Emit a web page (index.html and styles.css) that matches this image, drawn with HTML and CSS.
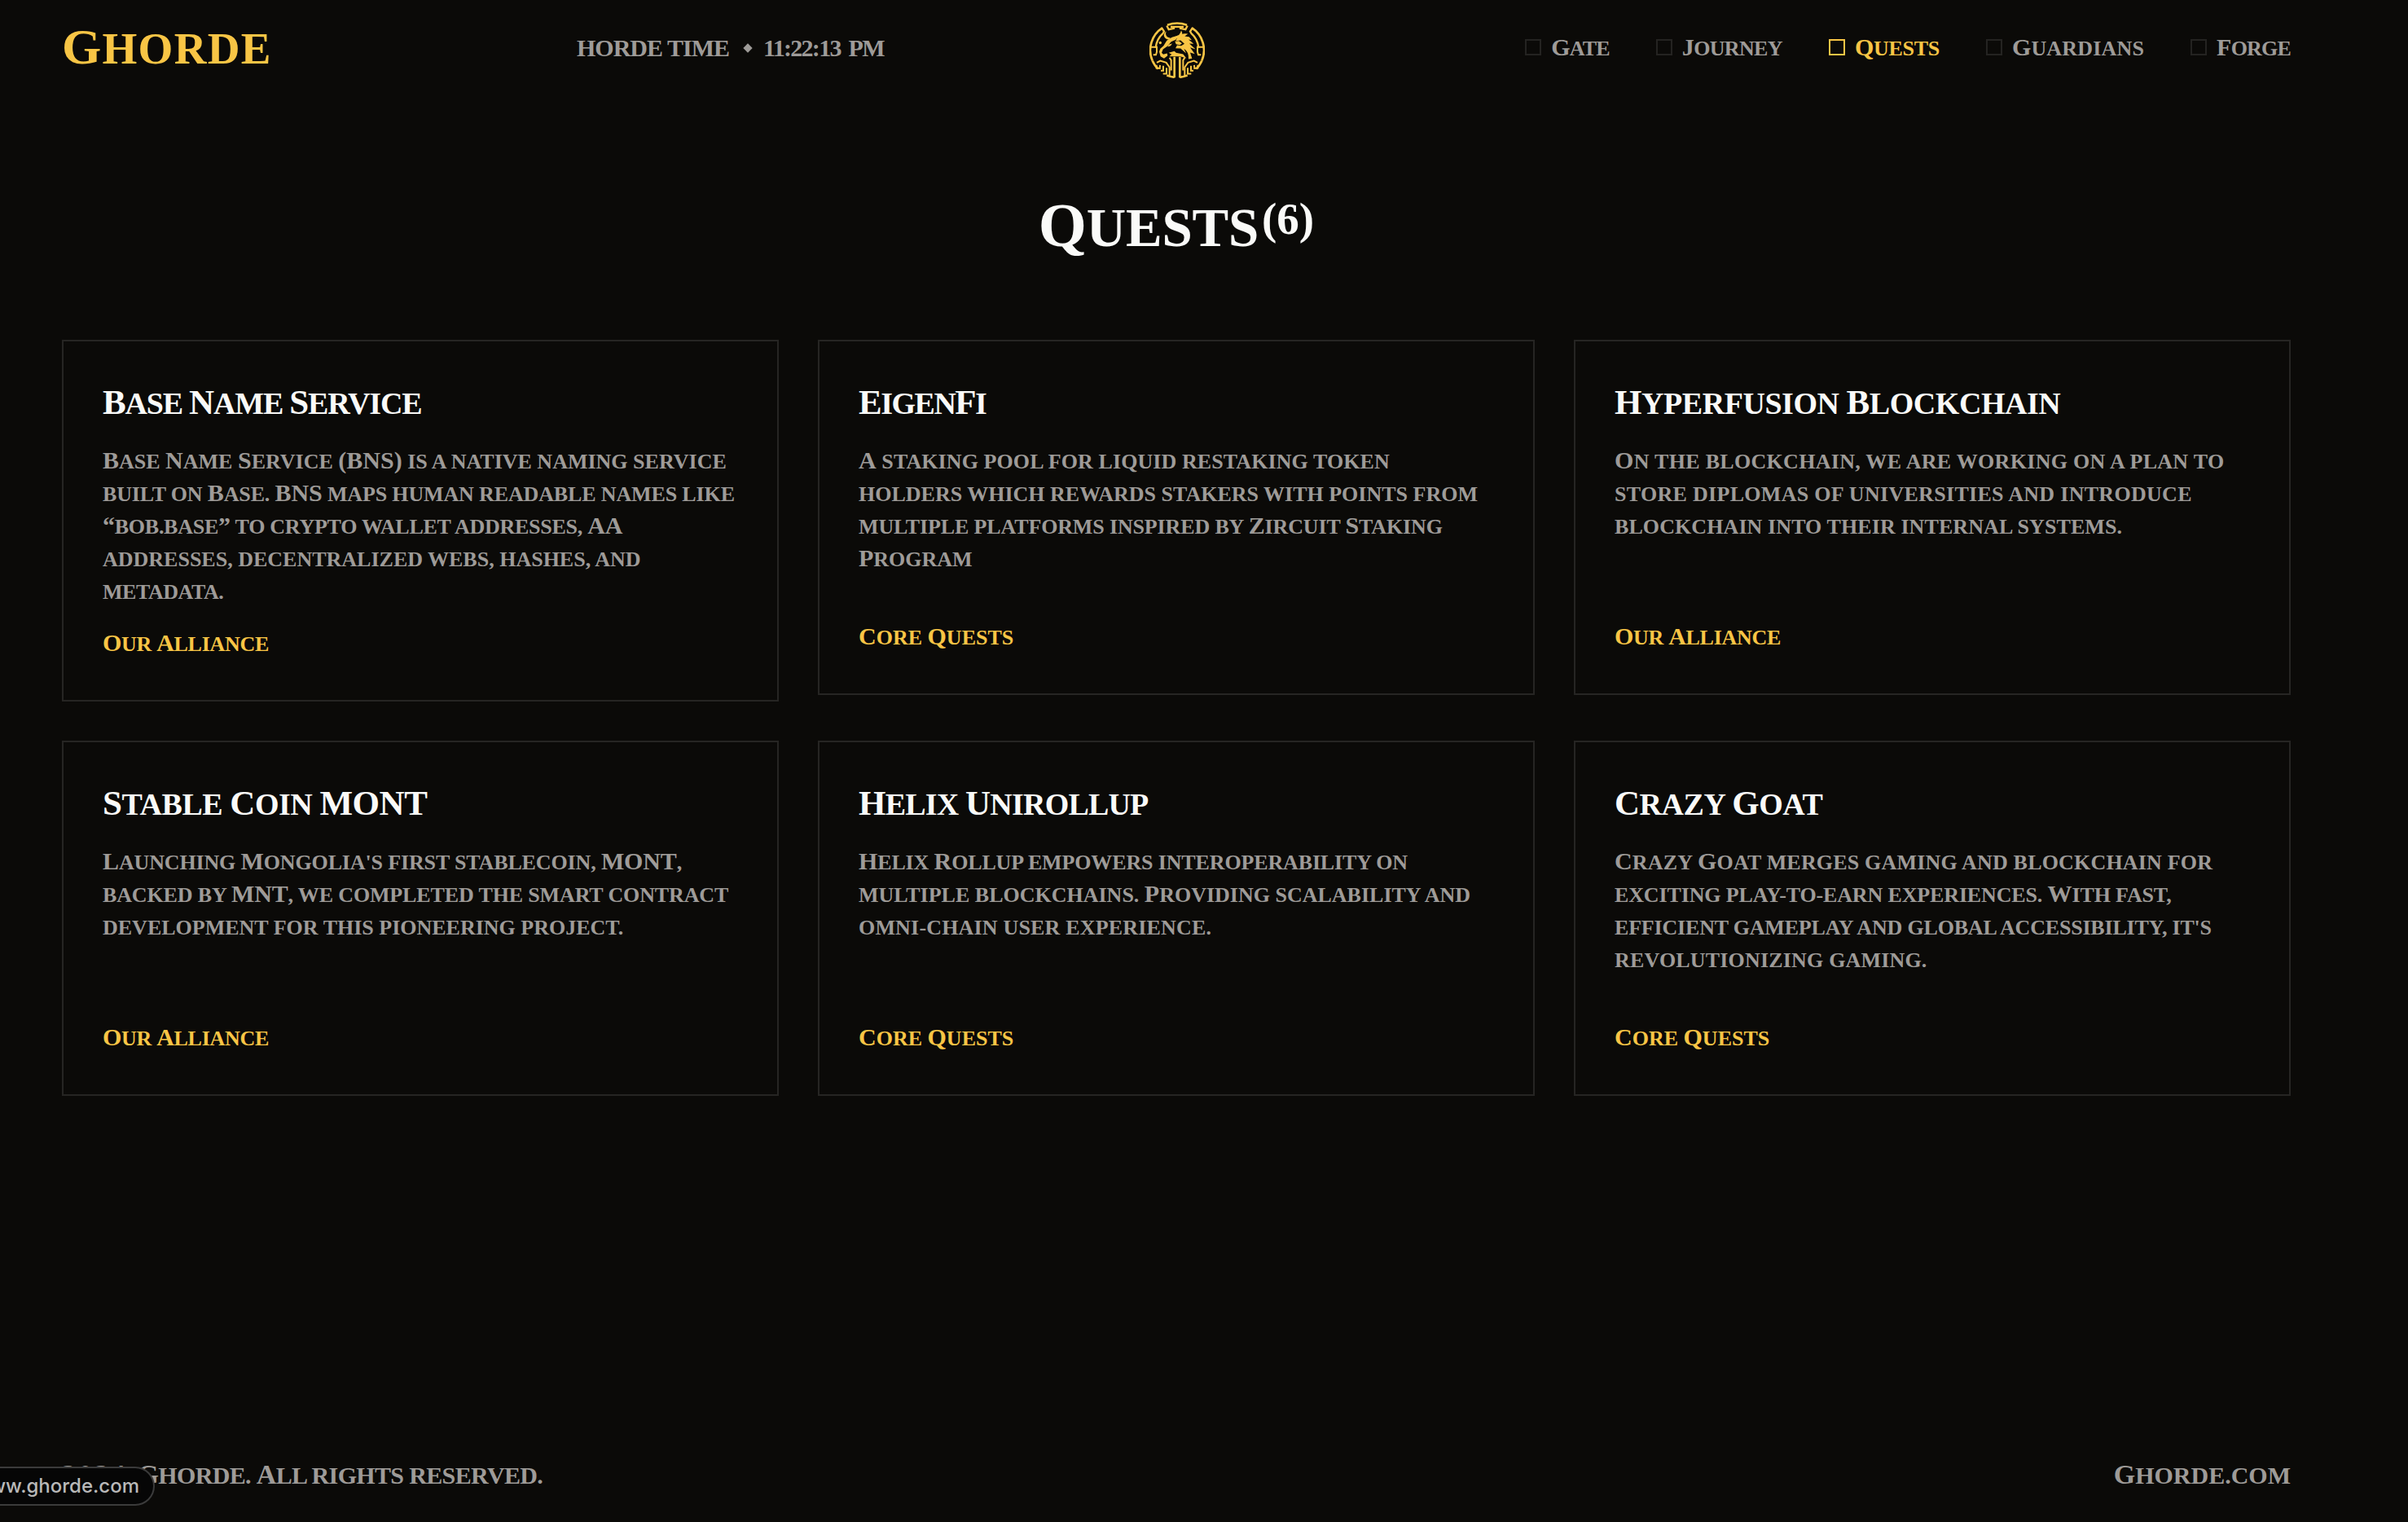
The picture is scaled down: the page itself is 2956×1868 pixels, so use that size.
FILE: index.html
```html
<!DOCTYPE html>
<html lang="en">
<head>
<meta charset="utf-8">
<title>Ghorde – Quests</title>
<link rel="stylesheet" href="styles.css">
</head>
<body>
<div class="page">
  <header class="header">
    <a class="brand"><b>G</b>horde</a>
    <div class="clock"><span class="clock-label">HORDE TIME</span><i class="diamond"></i><span class="clock-time">11:22:13 PM</span></div>
    <svg class="emblem" viewBox="34 32 204 206" fill="none" stroke="currentColor" stroke-width="8">
      <!-- outer ring and the inner bands -->
      <path d="M45 174A98 98 0 0 1 82 53M100 43A98 98 0 0 1 172 43M190 53A98 98 0 0 1 227 174"/>
      <path d="M45 174Q54 194 66 204M227 174Q218 194 206 204M98 228Q112 233 126 235M146 235Q160 233 174 228"/>
      <path d="M79 53L88 66L84 73A80 80 0 0 0 57 127M193 53L184 66L188 73A80 80 0 0 1 215 127" stroke-width="7"/>
      <path d="M48 152H58L61 142V124H40M224 152H214L211 142V124H232" stroke-width="6"/>
      <path d="M98 45L105 59L124 55V49M174 45L167 59L148 55V49M112 49H160" stroke-width="7"/>
      <g fill="currentColor" stroke="none">
        <!-- horns -->
        <path d="M96 66Q91 80 101 87L112 91L105 97Q88 92 87 80Q88 70 96 66Z"/>
        <path d="M151 62Q159 76 149 87L136 92L126 88L143 79Q149 72 151 62Z"/>
        <!-- head -->
        <path d="M140 81L131 97L114 104L101 120L84 132L79 145L85 151L99 147L101 155L88 166L75 158L70 141L74 130L86 119L98 100L117 88Z"/>
        <path d="M105 115L118 111L112 119L101 123Z"/>
        <path d="M128 103L142 101L154 110L146 116L132 113Z"/>
        <path d="M105 145L126 139L132 145L158 150L170 165L148 158H107L116 151Z"/>
        <!-- mane -->
        <path d="M138 85Q151 71 176 75L164 84L180 86L190 98L178 96L197 112L181 111L204 132L184 125L201 149L184 144L191 166L178 168Q180 142 161 130L169 147L149 129L130 128L136 117L151 119L163 112L149 99L131 101Z"/>
        <circle cx="74" cy="108" r="5"/>
      </g>
      <!-- pillars and knot work -->
      <path d="M126 160V236M146 160V236" stroke-width="8"/>
      <path d="M108 163L114 172V210M164 163L158 172V210" stroke-width="6"/>
      <path d="M61 181L74 174L96 181L108 198V230M60 190V201L72 202L73 190M85 193V211H76M97 200V222H84M211 181L198 174L176 181L164 198V230M212 190V201L200 202L199 190M187 193V211H196M175 200V222H188" stroke-width="6"/>
    </svg>
    <nav class="nav">
      <a class="nav-item k-8"><i class="box"></i><span><b>G</b>ate</span></a>
      <a class="nav-item k-6"><i class="box"></i><span><b>J</b>ourney</span></a>
      <a class="nav-item active k-3"><i class="box"></i><span><b>Q</b>uests</span></a>
      <a class="nav-item k20c"><i class="box"></i><span><b>G</b>uardians</span></a>
      <a class="nav-item k-8"><i class="box"></i><span><b>F</b>orge</span></a>
    </nav>
  </header>

  <h1 class="heading"><span class="heading-text"><b>Q</b>uests</span><span class="count">(6)</span></h1>

  <main class="grid">
    <article class="card">
      <h2 class="k-13"><b>B</b>ase <b>N</b>ame <b>S</b>ervice</h2>
      <p>
        <span><b>B</b>ase <b>N</b>ame <b>S</b>ervice <b>(BNS)</b> is a native naming service</span>
        <span class="k-15c">built on <b>B</b>ase. <b>BNS</b> maps human readable names like</span>
        <span class="k-26c"><b>“</b>bob.base<b>”</b> to crypto wallet addresses, <b>AA</b></span>
        <span>addresses, decentralized webs, hashes, and</span>
        <span class="k-4">metadata.</span>
      </p>
      <a class="tag k-3"><b>O</b>ur <b>A</b>lliance</a>
    </article>
    <article class="card">
      <h2 class="k-15"><b>E</b>igen<b>F</b>i</h2>
      <p>
        <span class="k9c"><b>A</b> staking pool for liquid restaking token</span>
        <span>holders which rewards stakers with points from</span>
        <span class="k-15c">multiple platforms inspired by <b>Z</b>ircuit <b>S</b>taking</span>
        <span><b>P</b>rogram</span>
      </p>
      <a class="tag"><b>C</b>ore <b>Q</b>uests</a>
    </article>
    <article class="card">
      <h2 class="k-4"><b>H</b>yperfusion <b>B</b>lockchain</h2>
      <p>
        <span class="k30c"><b>O</b>n the blockchain, we are working on a plan to</span>
        <span class="k30c">store diplomas of universities and introduce</span>
        <span class="k9c">blockchain into their internal systems.</span>
      </p>
      <a class="tag k-3"><b>O</b>ur <b>A</b>lliance</a>
    </article>
    <article class="card">
      <h2 class="k-4"><b>S</b>table <b>C</b>oin <b>MONT</b></h2>
      <p>
        <span class="k-15c"><b>L</b>aunching <b>M</b>ongolia's first stablecoin, <b>MONT</b>,</span>
        <span class="k-15c">backed by <b>MNT</b>, we completed the smart contract</span>
        <span>development for this pioneering project.</span>
      </p>
      <a class="tag k-3"><b>O</b>ur <b>A</b>lliance</a>
    </article>
    <article class="card">
      <h2 class="k-8"><b>H</b>elix <b>U</b>nirollup</h2>
      <p>
        <span class="k-15c"><b>H</b>elix <b>R</b>ollup empowers interoperability on</span>
        <span>multiple blockchains. <b>P</b>roviding scalability and</span>
        <span class="k20c">omni-chain user experience.</span>
      </p>
      <a class="tag"><b>C</b>ore <b>Q</b>uests</a>
    </article>
    <article class="card">
      <h2 class="k-4"><b>C</b>razy <b>G</b>oat</h2>
      <p>
        <span class="k20c"><b>C</b>razy <b>G</b>oat merges gaming and blockchain for</span>
        <span class="k-15c">exciting play-to-earn experiences. <b>W</b>ith fast,</span>
        <span class="k-20c">efficient gameplay and global accessibility, it's</span>
        <span class="k20c">revolutionizing gaming.</span>
      </p>
      <a class="tag"><b>C</b>ore <b>Q</b>uests</a>
    </article>
  </main>

  <footer class="footer">
    <span class="copyright"><span class="year">2024 </span><b>G</b>horde. <b>A</b>ll rights reserved.</span>
    <span><b>G</b>horde.com</span>
  </footer>
</div>
<div class="status"><span>www.ghorde.com</span></div>
</body>
</html>
```
FILE: styles.css
```css
* { box-sizing: border-box; }

body {
  margin: 0;
  height: 1868px;
  overflow: hidden;
  background: #0b0a08;
  color: #9e9b98;
  font-family: "Liberation Serif", serif;
  font-weight: 700;
}

.page {
  width: 2888px;
  height: 1868px;
  padding: 0 76px;
  display: flex;
  flex-direction: column;
  text-transform: uppercase;
}

/* capitals stand slightly taller than the small capitals around them */
b { font-size: 30px; line-height: 0; }
i { font-style: normal; }

.header {
  height: 120px;
  flex: none;
  display: flex;
  align-items: center;
}
.brand {
  width: 632px;
  flex: none;
  font-size: 55px;
  line-height: 100px;
  color: #f8c545;
  letter-spacing: 1.3px;
}
.brand b { font-size: 62px; }

.clock {
  width: 703px;
  flex: none;
  display: flex;
  align-items: center;
  font-size: 30px;
  line-height: 60px;
  margin-bottom: 2px;
}
.clock-label { width: 189px; white-space: nowrap; letter-spacing: -1px; }
.clock-time { letter-spacing: -1.7px; word-spacing: 4px; white-space: nowrap; }
.diamond {
  width: 8px;
  height: 8px;
  margin: 0 15px 0 17px;
  background: currentColor;
  transform: rotate(45deg);
}

.emblem { width: 68px; height: 69px; flex: none; margin-top: 3px; color: #f8c545; }

.nav {
  margin-left: auto;
  display: flex;
  gap: 57px;
  font-size: 26px;
  line-height: 60px;
}
.nav-item { display: flex; align-items: center; gap: 12px; white-space: nowrap; }
.box { width: 20px; height: 20px; margin-bottom: 4px; border: 2px solid #242321; }
.active { color: #f8c545; }
.active .box { border-color: #f8c545; }

.heading {
  margin: 109px 0 88px;
  height: 100px;
  flex: none;
  display: flex;
  justify-content: center;
  align-items: baseline;
  gap: 4px;
  color: #fafaf8;
  font-size: 67px;
  line-height: 100px;
}
.heading-text { letter-spacing: -.2px; }
.heading b { font-size: 76px; }
.count { position: relative; top: -15px; font-size: 55px; }

.grid {
  display: grid;
  grid-template-columns: repeat(3, 880px);
  gap: 48px;
  align-items: start;
}
.card {
  min-height: 436px;
  padding: 49px 48px 48px;
  border: 2px solid #262523;
}
.card h2 {
  margin: 0 0 25px;
  font-size: 38px;
  line-height: 54px;
  color: #fafaf8;
}
.card h2 b { font-size: 43px; }
.card p {
  margin: 0 0 24px;
  min-height: 192px;
  font-size: 26px;
  line-height: 40px;
}
.card p > span { display: block; white-space: nowrap; }
.tag { display: block; font-size: 26px; line-height: 40px; color: #f8c545; }

.footer {
  margin-top: auto;
  padding-bottom: 27px;
  display: flex;
  justify-content: space-between;
  font-size: 30px;
  line-height: 60px;
}
.footer b { font-size: 34px; }
.copyright { letter-spacing: -.65px; }
.year { font-size: 34px; line-height: 0; letter-spacing: 3.2px; }

/* browser link preview, running off the left edge */
.status {
  position: absolute;
  left: 0;
  top: 1800px;
  width: 190px;
  height: 48px;
  overflow: hidden;
  display: flex;
  justify-content: flex-end;
  align-items: center;
  padding-right: 17px;
  border: 2px solid #3b3b3b;
  border-left: 0;
  border-radius: 0 24px 24px 0;
  background: #060606;
  color: #b9b9b9;
  font: 500 24px/44px Inter, "Liberation Sans", sans-serif;
}

/* tracking steps */
.k-3 { letter-spacing: -.3px; }
.k-4 { letter-spacing: -.45px; }
.k-6 { letter-spacing: -.65px; }
.k-8 { letter-spacing: -.8px; }
.k-13 { letter-spacing: -1.2px; }
.k-15 { letter-spacing: -1.5px; }
.k-26c { letter-spacing: -.26px; }
.k-20c { letter-spacing: -.19px; }
.k-15c { letter-spacing: -.14px; }
.k9c { letter-spacing: .09px; }
.k20c { letter-spacing: .18px; }
.k30c { letter-spacing: .3px; }
```
